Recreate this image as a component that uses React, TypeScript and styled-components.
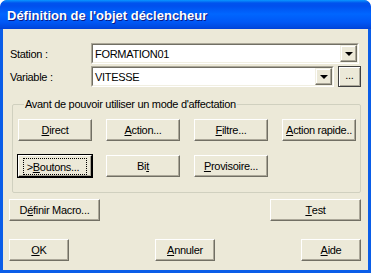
import React from "react";
import styled, { createGlobalStyle } from "styled-components";

const Global = createGlobalStyle`
  html, body { margin: 0; padding: 0; background: #ffffff; }
  body { font-family: "Liberation Sans", Arial, sans-serif; font-size: 11px; letter-spacing: -0.3px; }
`;

const Window = styled.div`
  width: 371px;
  height: 273px;
  box-sizing: border-box;
  background: #0a5de8;
  border-radius: 7px 7px 0 0;
  display: flex;
  flex-direction: column;
  overflow: hidden;
`;

const TitleBar = styled.div`
  height: 29px;
  flex: none;
  display: flex;
  align-items: center;
  padding-left: 7px;
  background: linear-gradient(
    to bottom,
    #0997ff 0px,
    #0053ee 3px,
    #0050ee 6px,
    #0066ff 14px,
    #0058f6 22px,
    #0047dd 28px,
    #003dd7 29px
  );
  border-radius: 7px 7px 0 0;
`;

const Title = styled.span`
  color: #ffffff;
  font-family: "Liberation Sans", Arial, sans-serif;
  font-weight: bold;
  font-size: 13px;
  letter-spacing: 0px;
  text-shadow: 1px 1px 0 #0a1883;
  padding-top: 1px;
`;

const Body = styled.div`
  flex: 1;
  margin: 0 3px 3px 3px;
  background: #ece9d8;
  display: flex;
  flex-direction: column;
  padding: 14px 0 0 6px;
  color: #000;
`;

const FieldRow = styled.div`
  display: flex;
  align-items: center;
  height: 21px;
  margin-bottom: 2px;
`;

const Label = styled.span`
  width: 81px;
  padding-left: 1px;
`;

const Combo = styled.div<{ $w: number }>`
  width: ${(p) => p.$w}px;
  height: 21px;
  box-sizing: border-box;
  border-top: 1px solid #aca899;
  border-left: 1px solid #aca899;
  border-right: 1px solid #fff;
  border-bottom: 1px solid #fff;
  display: flex;
`;

const ComboInner = styled.div`
  flex: 1;
  display: flex;
  align-items: center;
  box-sizing: border-box;
  border-top: 1px solid #716f64;
  border-left: 1px solid #716f64;
  border-right: 1px solid #f1efe2;
  border-bottom: 1px solid #f1efe2;
  background: #fff;
  padding-left: 2px;
`;

const ComboText = styled.span`
  flex: 1;
`;

const DropBtn = styled.div`
  width: 17px;
  height: 17px;
  box-sizing: border-box;
  background: #ece9d8;
  border-top: 1px solid #f1efe2;
  border-left: 1px solid #f1efe2;
  border-right: 1px solid #716f64;
  border-bottom: 1px solid #716f64;
  box-shadow: inset -1px -1px 0 #aca899, inset 1px 1px 0 #fff;
  display: flex;
  align-items: center;
  justify-content: center;
`;

const Arrow = styled.div`
  width: 0;
  height: 0;
  border-left: 4px solid transparent;
  border-right: 4px solid transparent;
  border-top: 4px solid #000;
  margin-top: 1px;
`;

const Btn = styled.div<{ $w: number; $default?: boolean }>`
  width: ${(p) => p.$w}px;
  height: 22px;
  box-sizing: border-box;
  background: #ece9d8;
  border-top: 1px solid #fff;
  border-left: 1px solid #fff;
  border-right: 1px solid #716f64;
  border-bottom: 1px solid #716f64;
  box-shadow: inset -1px -1px 0 #aca899;
  display: flex;
  align-items: center;
  justify-content: center;
  white-space: nowrap;
  ${(p) =>
    p.$default
      ? `outline: 1px solid #000; outline-offset: 0px; border-right-color:#000; border-bottom-color:#000;`
      : ""}
`;

const Focus = styled.span`
  border: 1px dotted #000;
  padding: 2px 7px 1px 3px;
`;

const SmallBtn = styled(Btn)`
  margin-left: 4px;
  padding-bottom: 4px;
  height: 21px;
  border: 1px solid #404040;
  box-shadow: inset 1px 1px 0 #fff, inset -1px -1px 0 #aca899;
`;

const Group = styled.fieldset`
  margin: 9px 0 0 3px;
  width: 349px;
  height: 95px;
  box-sizing: border-box;
  border: 1px solid #d0d0bf;
  border-radius: 2px;
  padding: 9px 0 0 5px;
  display: grid;
  grid-template-columns: repeat(4, 74px);
  grid-auto-rows: 22px;
  column-gap: 14px;
  row-gap: 14px;
  align-content: start;
`;

const Legend = styled.legend`
  padding: 0 1px 0 1px;
  margin-left: 6px;
`;

const ButtonRow = styled.div<{ $top: number }>`
  display: flex;
  justify-content: space-between;
  margin-top: ${(p) => p.$top}px;
  padding: 0 6px 0 0;
  width: 352px;
`;

const U = styled.u``;

export default function App() {
  return (
    <>
      <Global />
      <Window>
        <TitleBar>
          <Title>Définition de l'objet déclencheur</Title>
        </TitleBar>
        <Body>
          <FieldRow>
            <Label>Station :</Label>
            <Combo $w={268}>
              <ComboInner>
                <ComboText>FORMATION01</ComboText>
                <DropBtn>
                  <Arrow />
                </DropBtn>
              </ComboInner>
            </Combo>
          </FieldRow>
          <FieldRow>
            <Label>Variable :</Label>
            <Combo $w={243}>
              <ComboInner>
                <ComboText>VITESSE</ComboText>
                <DropBtn>
                  <Arrow />
                </DropBtn>
              </ComboInner>
            </Combo>
            <SmallBtn $w={23}>...</SmallBtn>
          </FieldRow>
          <Group>
            <Legend>Avant de pouvoir utiliser un mode d'affectation</Legend>
            <Btn $w={74}>
              <U>D</U>irect
            </Btn>
            <Btn $w={74}>
              <U>A</U>ction...
            </Btn>
            <Btn $w={74}>
              <U>F</U>iltre...
            </Btn>
            <Btn $w={74}>
              <U>A</U>ction rapide..
            </Btn>
            <Btn $w={74} $default>
              <Focus>
                &gt;<U>B</U>outons...
              </Focus>
            </Btn>
            <Btn $w={74}>
              Bi<U>t</U>
            </Btn>
            <Btn $w={74}>
              <U>P</U>rovisoire...
            </Btn>
          </Group>
          <ButtonRow $top={6}>
            <Btn $w={91}>
              D<U>é</U>finir Macro...
            </Btn>
            <Btn $w={91}>
              <U>T</U>est
            </Btn>
          </ButtonRow>
          <ButtonRow $top={18}>
            <Btn $w={60}>
              <U>O</U>K
            </Btn>
            <Btn $w={60}>
              <U>A</U>nnuler
            </Btn>
            <Btn $w={60}>
              <U>A</U>ide
            </Btn>
          </ButtonRow>
        </Body>
      </Window>
    </>
  );
}
